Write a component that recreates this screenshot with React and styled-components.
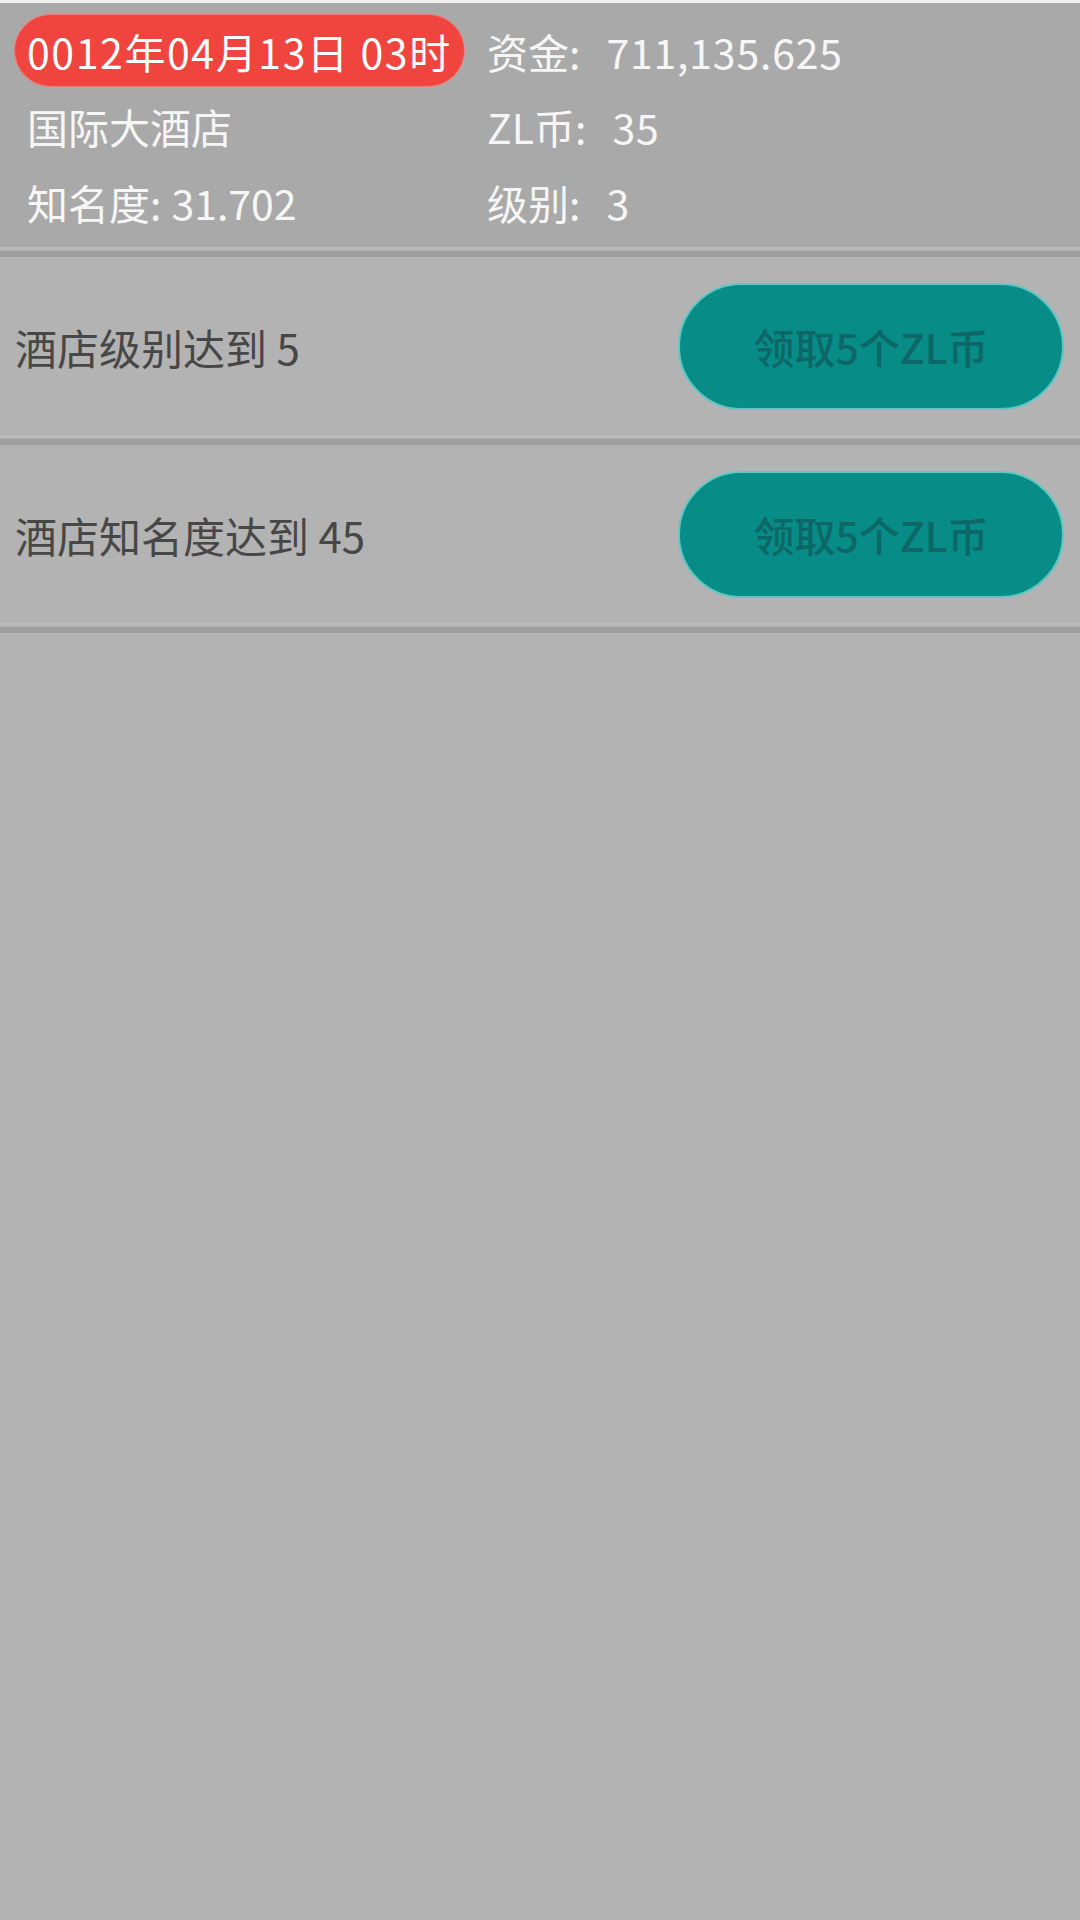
import React from 'react'
import styled, { createGlobalStyle } from 'styled-components'

const GlobalStyle = createGlobalStyle`
    html, body {
        margin: 0;
        padding: 0;
        background: #b3b3b3;
    }
    body {
        font-family: "Noto Sans CJK SC", "Noto Sans", sans-serif;
    }
`

const tasks = [
    { id: 1, text: '酒店级别达到 5', reward: '领取5个ZL币' },
    { id: 2, text: '酒店知名度达到 45', reward: '领取5个ZL币' },
]

function App() {
    return (
        <Page>
            <GlobalStyle />
            <Header>
                <LeftCell>
                    <DateBadge>0012年04月13日 03时</DateBadge>
                </LeftCell>
                <RightCell>
                    <Label>资金:</Label>
                    <Value wide>711,135.625</Value>
                </RightCell>
                <LeftCell inset>
                    <Label>国际大酒店</Label>
                </LeftCell>
                <RightCell>
                    <Label>ZL币:</Label>
                    <Value wide>35</Value>
                </RightCell>
                <LeftCell inset>
                    <Label>知名度:</Label>
                    <Value>31.702</Value>
                </LeftCell>
                <RightCell>
                    <Label>级别:</Label>
                    <Value wide>3</Value>
                </RightCell>
            </Header>
            <Divider />
            {tasks.map(task => (
                <React.Fragment key={task.id}>
                    <TaskRow>
                        <TaskText>{task.text}</TaskText>
                        <ClaimButton>{task.reward}</ClaimButton>
                    </TaskRow>
                    <Divider />
                </React.Fragment>
            ))}
        </Page>
    )
}

const Page = styled.div`
    width: 1080px;
    min-height: 1920px;
    background: #b3b3b3;
`

const Header = styled.div`
    display: grid;
    grid-template-columns: 472px 1fr;
    grid-template-rows: 71px 72px 72px;
    row-gap: 4px;
    padding: 12px 0 9px 15px;
    background: #a9a9a9;
    border-top: 3px solid #efefef;
    color: #f6f6f6;
    font-size: 41px;
`

const LeftCell = styled.div`
    display: flex;
    align-items: center;
    padding-left: ${props => (props.inset ? '12px' : '0')};
    white-space: nowrap;
`

const RightCell = styled.div`
    display: flex;
    align-items: center;
    white-space: nowrap;
`

const Label = styled.span``

const Value = styled.span`
    margin-left: ${props => (props.wide ? '26px' : '10px')};
    letter-spacing: ${props => (props.wide ? '0.8px' : '0')};
`

const DateBadge = styled.div`
    display: flex;
    align-items: center;
    height: 71px;
    padding: 0 12px;
    box-sizing: border-box;
    border-radius: 36px;
    background: #f0443f;
    box-shadow: 0 0 0 1px #f27a76;
    color: #fff;
    font-size: 41px;
    letter-spacing: 1.6px;
`

const Divider = styled.div`
    height: 10px;
    background: linear-gradient(
        to bottom,
        #bbbbbb 0,
        #bbbbbb 3px,
        #adadad 3px,
        #adadad 4px,
        #9f9f9f 4px,
        #9f9f9f 10px
    );
`

const TaskRow = styled.div`
    display: flex;
    align-items: center;
    justify-content: space-between;
    height: 178px;
    padding: 0 16px 0 15px;
    background: #b3b3b3;
`

const TaskText = styled.div`
    color: #474747;
    font-size: 42px;
`

const ClaimButton = styled.button`
    width: 386px;
    height: 127px;
    border: 2px solid #5fc7c2;
    border-radius: 64px;
    background: #078c88;
    color: #0d6766;
    font-size: 41px;
    font-weight: 500;
    font-family: "Noto Sans CJK SC", sans-serif;
    cursor: pointer;
`

export default App
